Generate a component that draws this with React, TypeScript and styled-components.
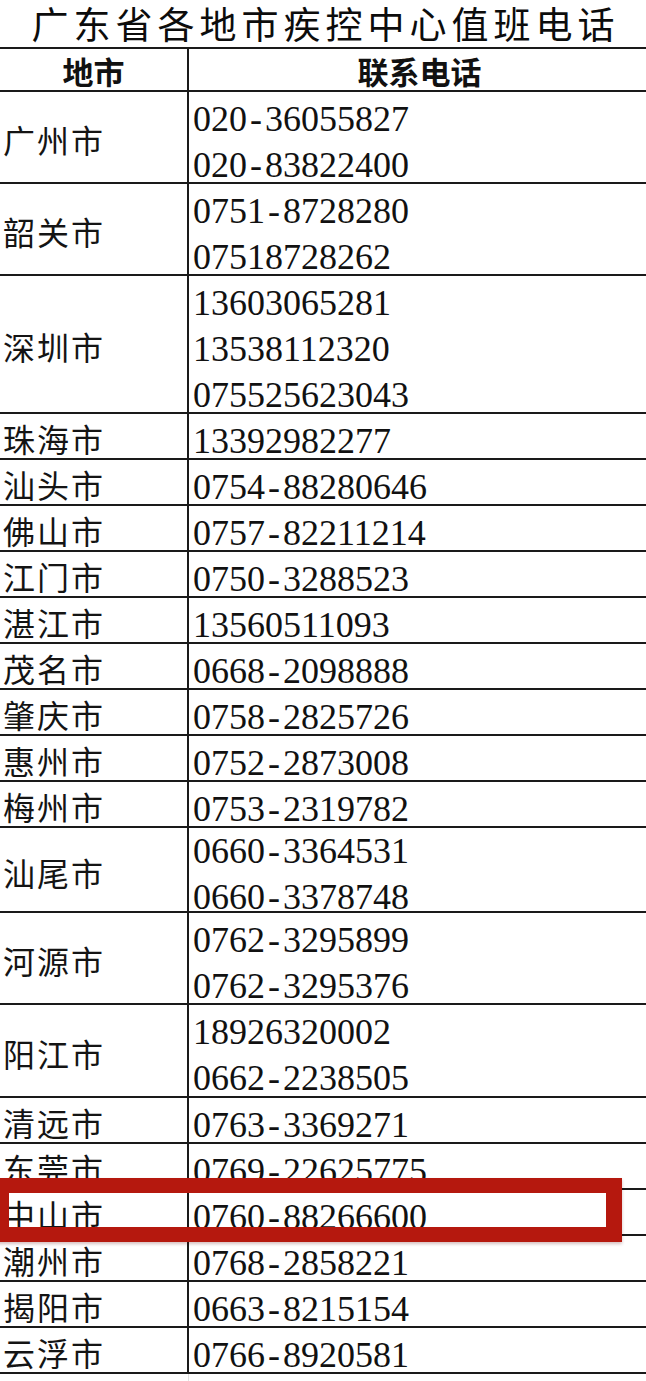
import React from "react"
import styled, { createGlobalStyle } from "styled-components"

type Row = { city: string; phones: string[]; h?: number; pt?: number }

const rows: Row[] = [
	{ city: "广州市", phones: ["020-36055827", "020-83822400"] },
	{ city: "韶关市", phones: ["0751-8728280", "07518728262"] },
	{ city: "深圳市", phones: ["13603065281", "13538112320", "075525623043"] },
	{ city: "珠海市", phones: ["13392982277"] },
	{ city: "汕头市", phones: ["0754-88280646"] },
	{ city: "佛山市", phones: ["0757-82211214"] },
	{ city: "江门市", phones: ["0750-3288523"] },
	{ city: "湛江市", phones: ["13560511093"] },
	{ city: "茂名市", phones: ["0668-2098888"] },
	{ city: "肇庆市", phones: ["0758-2825726"] },
	{ city: "惠州市", phones: ["0752-2873008"] },
	{ city: "梅州市", phones: ["0753-2319782"] },
	{ city: "汕尾市", phones: ["0660-3364531", "0660-3378748"], h: 85, pt: 0 },
	{ city: "河源市", phones: ["0762-3295899", "0762-3295376"] },
	{ city: "阳江市", phones: ["18926320002", "0662-2238505"], h: 93 },
	{ city: "清远市", phones: ["0763-3369271"] },
	{ city: "东莞市", phones: ["0769-22625775"] },
	{ city: "中山市", phones: ["0760-88266600"] },
	{ city: "潮州市", phones: ["0768-2858221"] },
	{ city: "揭阳市", phones: ["0663-8215154"] },
	{ city: "云浮市", phones: ["0766-8920581"] },
]

const renderPhone = (p: string) =>
	p.split(/(-)/).map((part, i) => (part === "-" ? <Dash key={i}>-</Dash> : <span key={i}>{part}</span>))

export default function App() {
	return (
		<>
			<GlobalStyle />
			<Page>
				<Title>广东省各地市疾控中心值班电话</Title>
				<Table>
					<HeadCell $left>地市</HeadCell>
					<HeadCell>联系电话</HeadCell>
					{rows.map((r) => {
						const h = r.h ?? r.phones.length * 46
						return (
							<React.Fragment key={r.city}>
								<CityCell $h={h}>{r.city}</CityCell>
								<PhoneCell $h={h} $pt={r.pt ?? 4}>
									{r.phones.map((p) => (
										<PhoneLine key={p}>{renderPhone(p)}</PhoneLine>
									))}
								</PhoneCell>
							</React.Fragment>
						)
					})}
				</Table>
				<BottomDivider />
				<Highlight />
			</Page>
		</>
	)
}

const GlobalStyle = createGlobalStyle`
	html, body {
		margin: 0;
		padding: 0;
		background: #ffffff;
	}
`

const Page = styled.div`
	position: relative;
	width: 646px;
	height: 1381px;
	overflow: hidden;
	background: #ffffff;
	color: #111111;
	font-family: "Noto Sans CJK SC", "Noto Sans", sans-serif;
`

const Title = styled.div`
	height: 47px;
	line-height: 47px;
	text-align: center;
	font-size: 37px;
	letter-spacing: 5px;
	padding-left: 5px;
	white-space: nowrap;
	color: #0c0c0c;
`

const Table = styled.div`
	display: grid;
	grid-template-columns: 189px 1fr;
	border-top: 2px solid #1a1a1a;
`

const HeadCell = styled.div<{ $left?: boolean }>`
	box-sizing: border-box;
	height: 43px;
	display: flex;
	align-items: center;
	justify-content: center;
	padding-left: ${(p) => (p.$left ? "0" : "4px")};
	padding-top: 2px;
	font-size: 31px;
	font-weight: 700;
	border-bottom: 2px solid #1a1a1a;
	border-right: ${(p) => (p.$left ? "2px solid #1a1a1a" : "none")};
`

const CityCell = styled.div<{ $h: number }>`
	box-sizing: border-box;
	height: ${(p) => p.$h}px;
	display: flex;
	align-items: center;
	padding: 4px 0 0 3px;
	font-size: 32px;
	letter-spacing: 2px;
	white-space: nowrap;
	color: #141414;
	border-right: 2px solid #1a1a1a;
	border-bottom: 2px solid #1a1a1a;
`

const PhoneCell = styled.div<{ $h: number; $pt: number }>`
	box-sizing: border-box;
	height: ${(p) => p.$h}px;
	padding: ${(p) => p.$pt}px 0 0 4px;
	border-bottom: 2px solid #1a1a1a;
`

const PhoneLine = styled.div`
	height: 46px;
	line-height: 46px;
	font-family: "Liberation Serif", "Times New Roman", serif;
	font-size: 36px;
	white-space: nowrap;
	color: #111111;
`

const Dash = styled.span`
	display: inline-block;
	width: 18px;
	text-align: center;
`

const BottomDivider = styled.div`
	margin-left: 188px;
	width: 1px;
	height: 10px;
	background: #e2e2e2;
`

const Highlight = styled.div`
	position: absolute;
	left: -6px;
	top: 1178px;
	width: 628px;
	height: 64px;
	box-sizing: border-box;
	border: 15px solid #b5180e;
	border-right-width: 16px;
	box-shadow: 0 2px 3px rgba(90, 0, 0, 0.25);
`
